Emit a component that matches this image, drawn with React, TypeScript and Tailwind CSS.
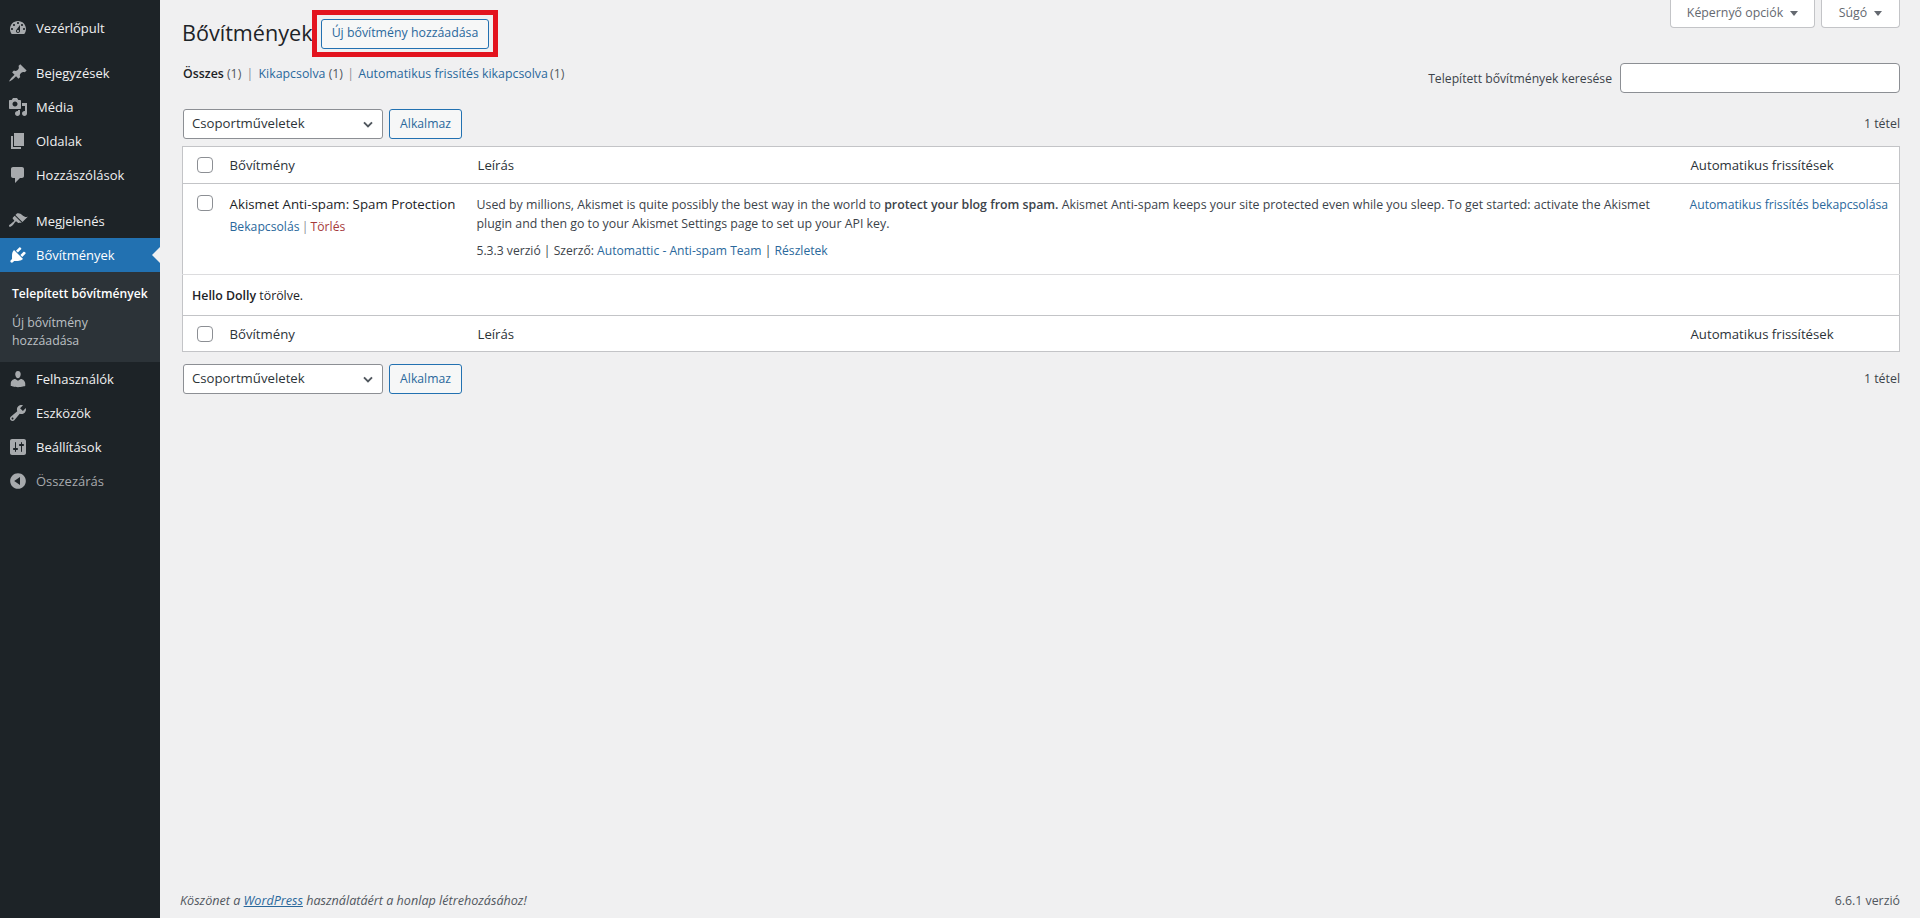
const font = "[font-family:'Open_Sans','Noto_Sans',sans-serif]";

const icons: Record<string, string> = {
  dashboard:
    "M3.76 16h12.48c1.1-1.37 1.76-3.11 1.76-5 0-4.42-3.58-8-8-8s-8 3.58-8 8c0 1.89.66 3.63 1.76 5zM10 4c.55 0 1 .45 1 1s-.45 1-1 1-1-.45-1-1 .45-1 1-1zM6 6c.55 0 1 .45 1 1s-.45 1-1 1-1-.45-1-1 .45-1 1-1zm8 0c.55 0 1 .45 1 1s-.45 1-1 1-1-.45-1-1 .45-1 1-1zm-5.37 5.55L12 7v6c0 1.1-.9 2-2 2s-2-.9-2-2c0-.57.24-1.08.63-1.45zM4 10c.55 0 1 .45 1 1s-.45 1-1 1-1-.45-1-1 .45-1 1-1zm12 0c.55 0 1 .45 1 1s-.45 1-1 1-1-.45-1-1 .45-1 1-1zm-5 3c0-.55-.45-1-1-1s-1 .45-1 1 .45 1 1 1 1-.45 1-1z",
  post: "M10.44 3.02l1.82-1.82 6.36 6.35-1.83 1.82c-1.05-.68-2.48-.57-3.41.36l-.75.75c-.92.93-1.04 2.35-.35 3.41l-1.83 1.82-2.41-2.41-2.8 2.79c-.42.42-3.38 2.71-3.8 2.29s1.86-3.39 2.28-3.81l2.79-2.79L4.1 9.36l1.83-1.82c1.05.69 2.48.57 3.4-.36l.75-.75c.93-.92 1.05-2.35.36-3.41z",
  media:
    "M13 11V4c0-.55-.45-1-1-1h-1.67L9 1H5L3.67 3H2c-.55 0-1 .45-1 1v7c0 .55.45 1 1 1h10c.55 0 1-.45 1-1zM7 4.5c1.38 0 2.5 1.12 2.5 2.5S8.38 9.5 7 9.5 4.5 8.38 4.5 7 5.62 4.5 7 4.5zM14 6h5v10.5c0 1.38-1.12 2.5-2.5 2.5S14 17.88 14 16.5s1.12-2.5 2.5-2.5c.17 0 .34.02.5.05V9h-3V6zm-4 8.05V13h2v3.5c0 1.38-1.12 2.5-2.5 2.5S7 17.88 7 16.5 8.12 14 9.5 14c.17 0 .34.02.5.05z",
  page: "M6 15V2h10v13H6zm-1 1h8v2H3V5h2v11z",
  comments: "M5 2h9c1.1 0 2 .9 2 2v7c0 1.1-.9 2-2 2h-2l-5 5v-5H5c-1.1 0-2-.9-2-2V4c0-1.1.9-2 2-2z",
  appearance:
    "M14.48 11.06L7.41 3.99l1.5-1.5c.5-.56 2.3-.47 3.51.32 1.21.8 1.43 1.28 2.91 2.1 1.18.64 2.45 1.26 4.45.85zm-.71.71L6.7 4.7 4.93 6.47c-.39.39-.39 1.02 0 1.41l1.06 1.06c.39.39.39 1.03 0 1.42-.6.6-1.43 1.11-2.21 1.69-.35.26-.7.53-1.01.84C1.43 13.23.4 14.75 1.2 15.55c.8.79 2.32-.24 3.66-1.58.31-.31.58-.66.84-1.01.58-.78 1.09-1.61 1.69-2.21.39-.39 1.02-.39 1.41 0l1.06 1.06c.39.39 1.02.39 1.41 0z",
  plugins:
    "M13.11 4.36L9.87 7.6 8 5.73l3.24-3.24c.35-.34 1.05-.2 1.56.32.52.51.66 1.21.31 1.55zm-8 1.77l.91-1.12 9.01 9.01-1.19.84c-.71.71-2.63 1.16-3.82 1.16H6.14L4.9 17.26c-.59.59-1.54.59-2.12 0-.59-.58-.59-1.53 0-2.12l1.24-1.24v-3.88c0-1.13.4-3.19 1.09-3.89zm7.26 3.97l3.24-3.24c.34-.35 1.04-.21 1.55.31.52.51.66 1.21.31 1.55l-3.24 3.25z",
  users:
    "M10 9.25c-2.27 0-2.73-3.44-2.73-3.44C7 4.02 7.82 2 9.97 2c2.16 0 2.98 2.02 2.71 3.81 0 0-.41 3.44-2.68 3.44zm0 2.57L12.72 10c2.39 0 4.52 2.33 4.52 4.53v2.49s-3.65 1.13-7.24 1.13c-3.65 0-7.24-1.13-7.24-1.13v-2.49c0-2.25 1.94-4.48 4.47-4.48z",
  tools:
    "M16.68 9.77c-1.34 1.34-3.3 1.67-4.95.99l-5.41 6.52c-.99.99-2.59.99-3.58 0s-.99-2.59 0-3.57l6.52-5.42c-.68-1.65-.35-3.61.99-4.95 1.28-1.28 3.12-1.62 4.72-1.06l-2.89 2.89 2.82 2.82 2.86-2.87c.53 1.58.18 3.39-1.08 4.65zM3.81 16.21c.4.39 1.04.39 1.43 0 .4-.4.4-1.04 0-1.43-.39-.4-1.03-.4-1.43 0-.39.39-.39 1.03 0 1.43z",
  settings:
    "M18 16V4c0-1.1-.9-2-2-2H4c-1.1 0-2 .9-2 2v12c0 1.1.9 2 2 2h12c1.1 0 2-.9 2-2zM8 11h1c.55 0 1 .45 1 1s-.45 1-1 1H8v1.5c0 .28-.22.5-.5.5s-.5-.22-.5-.5V13H6c-.55 0-1-.45-1-1s.45-1 1-1h1V5.5c0-.28.22-.5.5-.5s.5.22.5.5V11zm5-2h-1c-.55 0-1-.45-1-1s.45-1 1-1h1V5.5c0-.28.22-.5.5-.5s.5.22.5.5V7h1c.55 0 1 .45 1 1s-.45 1-1 1h-1v5.5c0 .28-.22.5-.5.5s-.5-.22-.5-.5V9z",
  collapse: "M10 2.16c4.33 0 7.84 3.51 7.84 7.84s-3.51 7.84-7.84 7.84S2.16 14.33 2.16 10 5.71 2.16 10 2.16zm2 11.72V6.12L6.18 9.97z",
};

const MenuItem = ({ icon, label, active, className = "" }: { icon: string; label: string; active?: boolean; className?: string }) => (
  <div className={`relative flex h-[34px] items-center ${active ? "bg-[#2271b1] text-white" : "text-[#f0f0f1]"} ${className}`}>
    <svg viewBox="0 0 20 20" className={`ml-[8px] mr-[8px] h-5 w-5 shrink-0 ${active ? "fill-white" : "fill-[#a7aaad]"}`}>
      <path d={icons[icon]} />
    </svg>
    <span className="text-[13px] leading-[18px]">{label}</span>
    {active && <span className="absolute right-0 top-[9px] h-0 w-0 border-y-[8px] border-r-[8px] border-y-transparent border-r-[#f0f0f1]" />}
  </div>
);

const Sidebar = () => (
  <aside className="flex min-h-[918px] w-[160px] shrink-0 flex-col bg-[#1d2327] pt-[11px]">
    <MenuItem icon="dashboard" label="Vezérlőpult" className="mb-[11px]" />
    <MenuItem icon="post" label="Bejegyzések" />
    <MenuItem icon="media" label="Média" />
    <MenuItem icon="page" label="Oldalak" />
    <MenuItem icon="comments" label="Hozzászólások" className="mb-[12px]" />
    <MenuItem icon="appearance" label="Megjelenés" />
    <MenuItem icon="plugins" label="Bővítmények" active />
    <div className="bg-[#2c3338] px-3 pb-[7px] pt-[8px] text-[12.3px] leading-[18px]">
      <div className="whitespace-nowrap py-[5px] text-[12.1px] font-semibold text-white">Telepített bővítmények</div>
      <div className="pb-[5px] pt-[6px] text-[#bcc0c4]">Új bővítmény hozzáadása</div>
    </div>
    <MenuItem icon="users" label="Felhasználók" />
    <MenuItem icon="tools" label="Eszközök" />
    <MenuItem icon="settings" label="Beállítások" />
    <div className="flex h-[34px] items-center text-[#a7aaad]">
      <svg viewBox="0 0 20 20" className="mx-[8px] h-5 w-5 shrink-0 fill-[#a7aaad]">
        <path d={icons.collapse} />
      </svg>
      <span className="text-[13px] leading-[18px]">Összezárás</span>
    </div>
  </aside>
);

const Checkbox = () => <span className="block h-4 w-4 rounded-[4px] border border-[#8c8f94] bg-white" />;

const Caret = () => <span className="ml-[7px] inline-block h-0 w-0 border-x-[4px] border-t-[5px] border-x-transparent border-t-[#646970]" />;

const BulkActions = ({ className = "" }: { className?: string }) => (
  <div className={`flex items-center justify-between ${className}`}>
    <div className="flex items-center gap-[6px]">
      <div className="relative h-[30px] w-[200px]">
        <select className="h-full w-full appearance-none rounded-[3px] border border-[#8c8f94] bg-white pl-2 pr-6 text-[13.2px] text-[#2c3338]">
          <option>Csoportműveletek</option>
        </select>
        <svg viewBox="0 0 20 20" className="pointer-events-none absolute right-[7px] top-[7px] h-4 w-4 fill-none stroke-[#50575e] stroke-[2.4]">
          <path d="M5 8l5 5 5-5" />
        </svg>
      </div>
      <button className="h-[30px] w-[73px] rounded-[3px] border border-[#2271b1] bg-[#f6f7f7] text-[12.2px] text-[#2a689c]">Alkalmaz</button>
    </div>
    <span className="text-[12.35px] text-[#3c434a]">1 tétel</span>
  </div>
);

const HeaderRow = ({ bottom }: { bottom?: boolean }) => (
  <tr className={`text-[13.2px] text-[#2c3338] ${bottom ? "h-[36px]" : "h-[37px] border-b border-[#c3c4c7]"}`}>
    <td className="pl-[14px]"><Checkbox /></td>
    <td className="pl-[11px] pt-[2px]">Bővítmény</td>
    <td className="pl-[10px] pt-[2px]">Leírás</td>
    <td className="pl-[10px] pt-[2px]">Automatikus frissítések</td>
  </tr>
);

export default function App() {
  return (
    <div className={`flex min-h-[918px] bg-[#f0f0f1] text-[12.35px] text-[#3c434a] ${font}`}>
      <Sidebar />
      <main className="flex min-w-0 flex-1 flex-col pl-[22px] pr-[20px]">
        <div className="flex h-[57px] items-start">
          <h1 className="mt-[18px] w-[130px] whitespace-nowrap text-[21.6px] leading-[29px] text-[#1d2327]">Bővítmények</h1>
          <div className="mt-[10px] flex h-[47px] items-center border-[5px] border-[#e3141f] px-[4px]">
            <button className="h-[30px] w-[168px] rounded-[3px] border border-[#2271b1] bg-[#f6f7f7] text-[12.35px] text-[#2a689c]">Új bővítmény hozzáadása</button>
          </div>
          <div className="ml-auto flex gap-[6px]">
            <div className="flex h-[28px] w-[145px] items-center justify-center rounded-b-[4px] border border-t-0 border-[#c3c4c7] bg-white text-[12.35px] text-[#646970]">Képernyő opciók<Caret /></div>
            <div className="flex h-[28px] w-[79px] items-center justify-center rounded-b-[4px] border border-t-0 border-[#c3c4c7] bg-white text-[12.35px] text-[#646970]">Súgó<Caret /></div>
          </div>
        </div>

        <div className="mt-[6px] flex items-start justify-between">
          <div className="ml-px mt-[2px] leading-[18px] text-[#50575e]">
            <span className="font-semibold text-[#1d2327]">Összes</span> (1) <span className="mx-[2px] text-[#8c8f94]">|</span> <a className="text-[#2a689c]">Kikapcsolva</a> (1) <span className="mx-[1px] text-[#8c8f94]">|</span> <a className="text-[#2a689c]">Automatikus frissítés kikapcsolva</a> <span className="-ml-px">(1)</span>
          </div>
          <div className="flex items-center gap-[8px]">
            <label className="pt-[2px] text-[12.2px]">Telepített bővítmények keresése</label>
            <input className="h-[30px] w-[280px] rounded-[4px] border border-[#8c8f94] bg-white" />
          </div>
        </div>

        <BulkActions className="mt-[16px] pl-px" />

        <table className="mt-[7px] w-full table-fixed border border-[#c3c4c7] bg-white">
          <colgroup>
            <col className="w-[36px]" />
            <col className="w-[249px]" />
            <col />
            <col className="w-[219px]" />
          </colgroup>
          <tbody>
            <HeaderRow />
            <tr className="h-[91px] border-b border-[#dcdcde] align-top">
              <td className="pl-[14px] pt-[11px]"><Checkbox /></td>
              <td className="pl-[11px] pt-[11px]">
                <div className="whitespace-nowrap text-[13.3px] leading-[19px] text-[#1d2327]">Akismet Anti-spam: Spam Protection</div>
                <div className="mt-[4px] text-[12.2px] leading-[18px]"><a className="text-[#2a689c]">Bekapcsolás</a> <span className="-mx-[1px] text-[#8c8f94]">|</span> <a className="text-[#a63a3b]">Törlés</a></div>
              </td>
              <td className="pl-[9px] pr-[10px] pt-[11px]">
                <p className="leading-[19px]">Used by millions, Akismet is quite possibly the best way in the world to <strong className="font-semibold">protect your blog from spam.</strong> Akismet Anti-spam keeps your site protected even while you sleep. To get started: activate the Akismet plugin and then go to your Akismet Settings page to set up your API key.</p>
                <p className="mt-[9px] text-[12.14px] leading-[18px]">5.3.3 verzió | Szerző: <a className="text-[#2a689c]">Automattic - Anti-spam Team</a> | <a className="text-[#2a689c]">Részletek</a></p>
              </td>
              <td className="pl-[9px] pt-[11px]"><a className="whitespace-nowrap text-[12.2px] leading-[19px] text-[#2a689c]">Automatikus frissítés bekapcsolása</a></td>
            </tr>
            <tr className="h-[41px] border-b border-[#c3c4c7]">
              <td colSpan={4} className="pl-[9px] pt-[2px] text-[#1d2327]"><strong className="font-semibold">Hello Dolly</strong> törölve.</td>
            </tr>
            <HeaderRow bottom />
          </tbody>
        </table>

        <BulkActions className="mt-[12px] pl-px" />

        <footer className="mt-auto flex h-[34px] items-center justify-between text-[#50575e]">
          <p className="-ml-[2px] text-[12.6px] italic">Köszönet a <a className="text-[#2a689c] underline">WordPress</a> használatáért a honlap létrehozásához!</p>
          <p>6.6.1 verzió</p>
        </footer>
      </main>
    </div>
  );
}
